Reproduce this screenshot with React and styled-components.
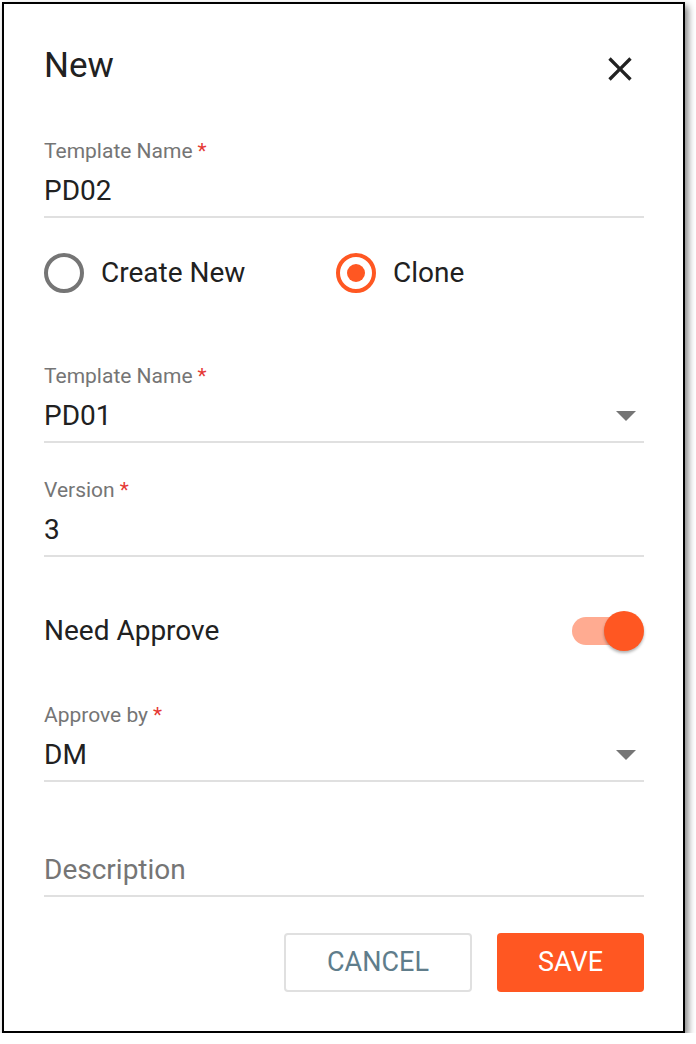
import styled, { createGlobalStyle } from 'styled-components';

const GlobalStyle = createGlobalStyle`
  html, body {
    margin: 0;
    padding: 0;
    background: #fff;
  }
  body {
    font-family: Roboto, 'Liberation Sans', sans-serif;
  }
`;

const fields = [
  { label: 'Template Name', value: 'PD02', required: true },
];

const Frame = styled.div`
  box-sizing: border-box;
  width: 683px;
  height: 1031px;
  margin: 2px 0 0 2px;
  border: 2px solid #000;
  background: #fff;
  box-shadow: 3px 4px 7px rgba(0, 0, 0, 0.5);
  padding: 42px 39px 39px 40px;
  display: flex;
  flex-direction: column;
`;

const Header = styled.div`
  display: flex;
  justify-content: space-between;
  align-items: flex-start;
  height: 40px;
`;

const Title = styled.h2`
  margin: 0;
  font: 400 35px/40px Roboto, sans-serif;
  color: #212121;
`;

const CloseButton = styled.button`
  border: 0;
  background: none;
  padding: 0;
  margin: 3px 4px 0 0;
  width: 40px;
  height: 40px;
  display: flex;
  cursor: pointer;
`;

const Field = styled.div`
  margin-top: ${(p) => p.$mt}px;
  height: 79px;
  box-sizing: border-box;
  border-bottom: 2px solid #e0e0e0;
  display: flex;
  flex-direction: column;
`;

const Label = styled.label`
  display: block;
  height: 24px;
  margin-bottom: 12px;
  font: 400 21px/24px Roboto, sans-serif;
  color: #757575;
`;

const Star = styled.span`
  color: #e53935;
  margin-left: 5px;
`;

const ValueRow = styled.div`
  display: flex;
  align-items: center;
  justify-content: space-between;
  height: 32px;
`;

const Value = styled.span`
  font: 400 28px/32px Roboto, sans-serif;
  color: ${(p) => (p.$placeholder ? '#757575' : '#212121')};
`;

const Caret = styled.span`
  width: 0;
  height: 0;
  margin-right: 8px;
  border-left: 10px solid transparent;
  border-right: 10px solid transparent;
  border-top: 10px solid #757575;
`;

const RadioGroup = styled.div`
  margin-top: 35px;
  display: grid;
  grid-template-columns: 292px auto;
  height: 40px;
`;

const RadioOption = styled.div`
  display: flex;
  align-items: center;
  gap: 17px;
  font: 400 28px/32px Roboto, sans-serif;
  color: #212121;
`;

const RadioCircle = styled.span`
  box-sizing: border-box;
  width: 40px;
  height: 40px;
  border-radius: 50%;
  border: 4px solid ${(p) => (p.$checked ? '#ff5722' : '#757575')};
  display: flex;
  align-items: center;
  justify-content: center;
  &::after {
    content: '';
    width: 18px;
    height: 18px;
    border-radius: 50%;
    background: #ff5722;
    display: ${(p) => (p.$checked ? 'block' : 'none')};
  }
`;

const ToggleRow = styled.div`
  margin-top: 54px;
  height: 40px;
  display: flex;
  align-items: center;
  justify-content: space-between;
  font: 400 28px/32px Roboto, sans-serif;
  color: #212121;
`;

const Switch = styled.span`
  position: relative;
  width: 72px;
  height: 40px;
  display: flex;
  align-items: center;
`;

const Track = styled.span`
  width: 58px;
  height: 28px;
  border-radius: 14px;
  background: #ffab91;
`;

const Thumb = styled.span`
  position: absolute;
  right: 0;
  top: 0;
  width: 40px;
  height: 40px;
  border-radius: 50%;
  background: #ff5722;
  box-shadow: 0 2px 3px rgba(0, 0, 0, 0.3);
`;

const Actions = styled.div`
  margin-top: 36px;
  display: flex;
  justify-content: flex-end;
  gap: 25px;
`;

const Button = styled.button`
  box-sizing: border-box;
  height: 59px;
  width: ${(p) => p.$w}px;
  border-radius: 4px;
  font: 400 27px/1 Roboto, sans-serif;
  text-transform: uppercase;
  cursor: pointer;
  border: ${(p) => (p.$primary ? '0' : '2px solid #e0e0e0')};
  background: ${(p) => (p.$primary ? '#ff5722' : '#fff')};
  color: ${(p) => (p.$primary ? '#fff' : '#607d8b')};
`;

const CloseIcon = () => (
  <svg width="40" height="40" viewBox="0 0 24 24">
    <path
      fill="#212121"
      d="M19 6.41 17.59 5 12 10.59 6.41 5 5 6.41 10.59 12 5 17.59 6.41 19 12 13.41 17.59 19 19 17.59 13.41 12z"
    />
  </svg>
);

const FormField = ({ label, value, required, select, placeholder, mt }) => (
  <Field $mt={mt}>
    <Label>
      {label}
      {required && <Star>*</Star>}
    </Label>
    <ValueRow>
      <Value $placeholder={placeholder}>{value}</Value>
      {select && <Caret />}
    </ValueRow>
  </Field>
);

export default function App() {
  return (
    <>
      <GlobalStyle />
      <Frame>
        <Header>
          <Title>New</Title>
          <CloseButton aria-label="Close">
            <CloseIcon />
          </CloseButton>
        </Header>

        {fields.map((f) => (
          <FormField key={f.label} {...f} mt={53} />
        ))}

        <RadioGroup>
          <RadioOption>
            <RadioCircle />
            Create New
          </RadioOption>
          <RadioOption>
            <RadioCircle $checked />
            Clone
          </RadioOption>
        </RadioGroup>

        <FormField label="Template Name" value="PD01" required select mt={71} />
        <FormField label="Version" value="3" required mt={35} />

        <ToggleRow>
          Need Approve
          <Switch>
            <Track />
            <Thumb />
          </Switch>
        </ToggleRow>

        <FormField label="Approve by" value="DM" required select mt={52} />
        <FormField label="" value="Description" placeholder mt={36} />

        <Actions>
          <Button $w={188}>Cancel</Button>
          <Button $w={147} $primary>
            Save
          </Button>
        </Actions>
      </Frame>
    </>
  );
}
